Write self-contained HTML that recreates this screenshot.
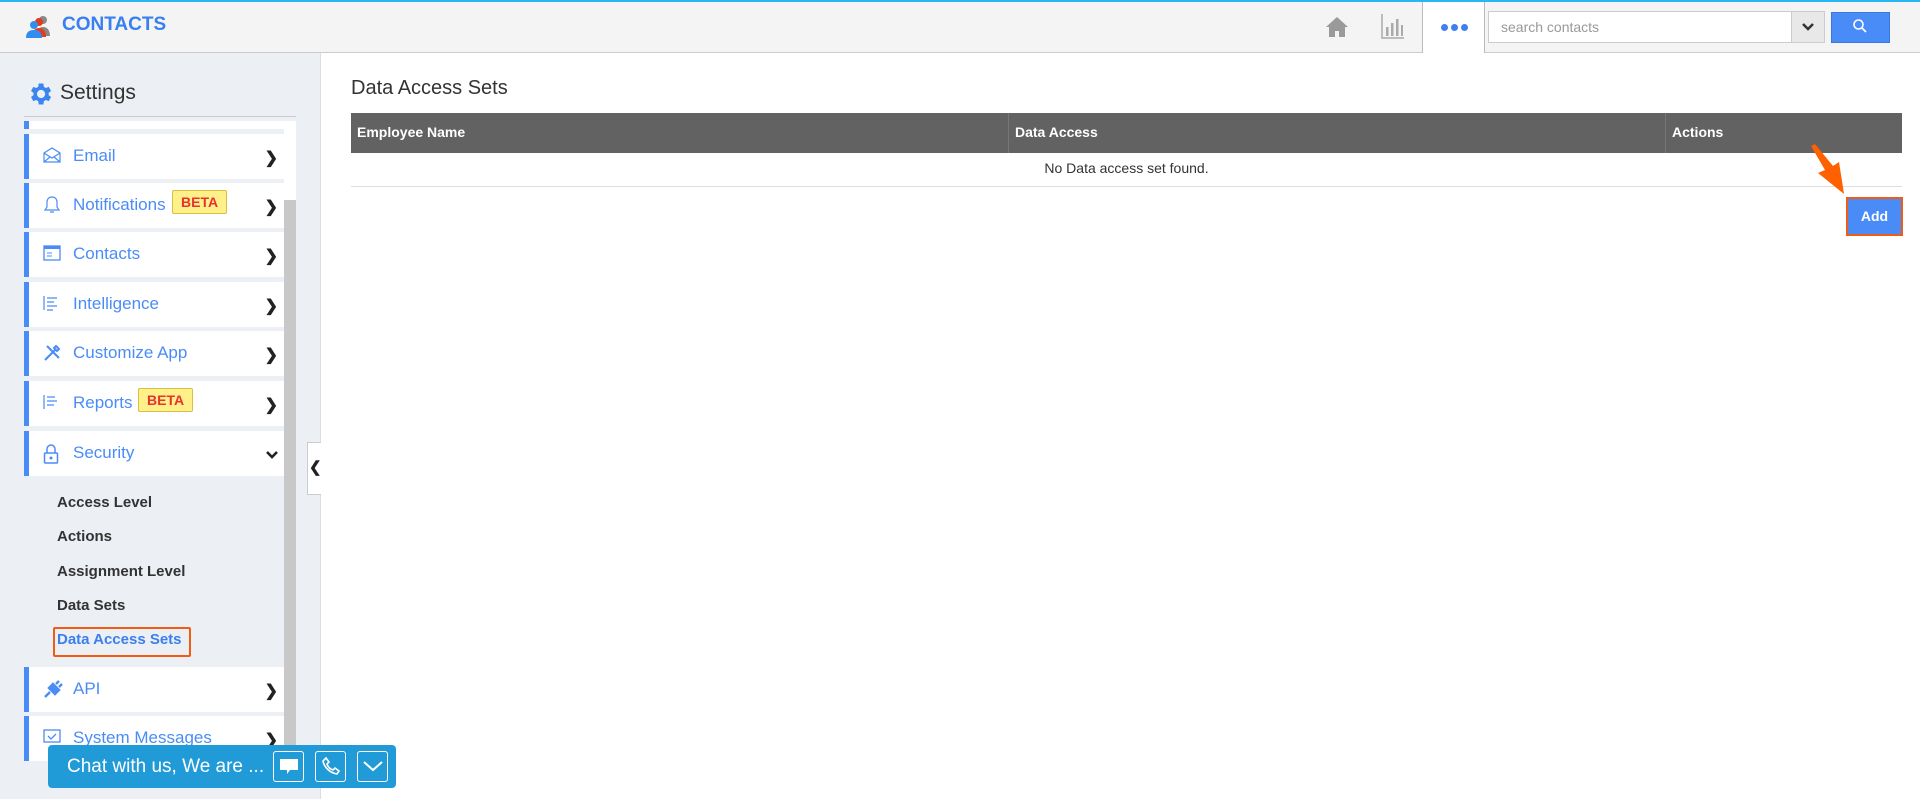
<!DOCTYPE html>
<html><head><style>
*{box-sizing:border-box;margin:0;padding:0}
body{width:1920px;height:799px;overflow:hidden;font-family:"Liberation Sans",Arial,sans-serif;background:#fff;position:relative}
.top{position:absolute;left:0;top:0;width:1920px;height:53px;background:#f4f4f4;border-top:2px solid #29b6f6;border-bottom:1px solid #ccc}
.side{position:absolute;left:0;top:53px;width:321px;height:746px;background:#eceff4;border-right:1px solid #ddd}
.abs{position:absolute}
.row{position:absolute;left:24px;width:260px;height:45px;background:#fff;border-left:5px solid #4a8cf7;color:#4a8cf7;font-size:17px}
.row .t{position:absolute;left:44px;top:12px}
.row .ch{position:absolute;right:6px;top:14px;font-weight:bold;color:#222;font-size:16px}
.row svg{position:absolute;left:14px;top:13px}
.beta{position:absolute;top:7px;background:#fff08a;border:1px solid #d8c040;color:#e8322f;font-weight:bold;font-size:14px;padding:3px 8px;border-radius:2px}
.sub{position:absolute;left:57px;font-size:15px;font-weight:bold;color:#333}
</style></head><body>
<div class="top">
 <svg class="abs" style="left:26px;top:12px" width="26" height="24" viewBox="0 0 26 24"><circle cx="17" cy="6" r="4" fill="#888"/><path d="M10 22c0-6 3-9 7-9s7 3 7 9z" fill="#888"/><circle cx="13" cy="8" r="4" fill="#e53a1e"/><path d="M6 23c0-6 3-9 7-9s7 3 7 9z" fill="#e53a1e"/><circle cx="8" cy="11" r="4" fill="#2f8ef0"/><path d="M0 24c0-6 3-8 8-8s8 2 8 8z" fill="#2f8ef0"/></svg>
 <div class="abs" style="left:62px;top:12px;font-size:19px;font-weight:bold;color:#3a7ff0">CONTACTS</div>
 <svg class="abs" style="left:1325px;top:13px" width="24" height="24" viewBox="0 0 24 24"><path d="M12 2L1 12h3v10h6v-6h4v6h6V12h3z" fill="#9a9a9a"/></svg>
 <svg class="abs" style="left:1381px;top:11px" width="24" height="26" viewBox="0 0 24 26"><path d="M1 1v24h22" stroke="#aaa" fill="none" stroke-width="1.5"/><rect x="5" y="14" width="2.5" height="9" fill="#aaa"/><rect x="10" y="10" width="2.5" height="13" fill="#aaa"/><rect x="15" y="6" width="2.5" height="17" fill="#aaa"/><rect x="20" y="12" width="2" height="11" fill="#aaa"/></svg>
 <div class="abs" style="left:1422px;top:0;width:63px;height:51px;background:#fff;border-left:1px solid #bbb;border-right:1px solid #bbb"></div>
 <div class="abs" style="left:1441px;top:22px;width:26px;height:8px"><span class="abs" style="left:0;width:7px;height:7px;border-radius:50%;background:#3f7ff0"></span><span class="abs" style="left:10px;width:7px;height:7px;border-radius:50%;background:#3f7ff0"></span><span class="abs" style="left:20px;width:7px;height:7px;border-radius:50%;background:#3f7ff0"></span></div>
 <div class="abs" style="left:1488px;top:9px;width:337px;height:32px;background:#fff;border:1px solid #ccc"></div>
 <div class="abs" style="left:1501px;top:17px;font-size:14px;color:#999">search contacts</div>
 <div class="abs" style="left:1791px;top:10px;width:33px;height:30px;background:#e8e8e8;border-left:1px solid #ccc"></div>
 <svg class="abs" style="left:1801px;top:20px" width="14" height="10" viewBox="0 0 14 10"><path d="M2 2l5 5 5-5" stroke="#333" stroke-width="2.5" fill="none"/></svg>
 <div class="abs" style="left:1831px;top:10px;width:59px;height:31px;background:#4a8cf7;border:1px solid #3a78e0"></div>
 <svg class="abs" style="left:1852px;top:16px" width="16" height="16" viewBox="0 0 16 16"><circle cx="6.5" cy="6.5" r="4.5" stroke="#fff" stroke-width="1.6" fill="none"/><path d="M10 10l4 4" stroke="#fff" stroke-width="1.8"/></svg>
</div>
<div class="side">
 <svg class="abs" style="left:26px;top:27px" width="28" height="28" viewBox="0 0 24 24"><path fill="#3a85f0" d="M19.4 13a7.5 7.5 0 000-2l2.1-1.6-2-3.5-2.5 1a7.7 7.7 0 00-1.7-1L14.9 3h-4l-.4 2.9a7.7 7.7 0 00-1.7 1l-2.5-1-2 3.5L6.4 11a7.5 7.5 0 000 2l-2.1 1.6 2 3.5 2.5-1c.5.4 1.100.7 1.7 1l.4 2.9h4l.4-2.9c.6-.3 1.2-.6 1.7-1l2.5 1 2-3.5zM12.9 15.5a3.5 3.5 0 110-7 3.5 3.5 0 010 7z"/></svg>
 <div class="abs" style="left:60px;top:28px;font-size:21px;color:#333">Settings</div>
 <div class="abs" style="left:24px;top:63px;width:272px;height:1px;background:#ccc"></div>
 <div class="abs" style="left:284px;top:68px;width:12px;height:639px;background:#fff"></div>
 <div class="abs" style="left:284px;top:147px;width:12px;height:559px;background:#c8c8c8"></div>
 <div class="abs" style="left:24px;top:68px;width:260px;height:8px;background:#fff;border-left:5px solid #4a8cf7"></div>
</div>
<div class="row" style="top:134px"><svg width="18" height="16" viewBox="0 0 18 16"><path d="M1 6l8-5 8 5v9H1z M1 6l8 5 8-5 M1 15l6-5 M17 15l-6-5" stroke="#4a8cf7" fill="none" stroke-width="1.2"/></svg><span class="t">Email</span><span class="ch">❯</span></div>
<div class="row" style="top:183px"><svg width="18" height="18" viewBox="0 0 18 18"><path d="M9 1c-3 0-5 2-5 5v5l-2 3h14l-2-3V6c0-3-2-5-5-5zM7 16h4" stroke="#4a8cf7" fill="none" stroke-width="1.2"/></svg><span class="t">Notifications</span><span class="beta" style="left:143px">BETA</span><span class="ch">❯</span></div>
<div class="row" style="top:232px"><svg width="18" height="16" viewBox="0 0 18 16"><rect x="1" y="1" width="16" height="14" stroke="#4a8cf7" fill="none" stroke-width="1.3"/><rect x="1" y="1" width="16" height="3" fill="#4a8cf7"/><path d="M4 8h5M4 11h5" stroke="#4a8cf7"/></svg><span class="t">Contacts</span><span class="ch">❯</span></div>
<div class="row" style="top:282px"><svg width="18" height="16" viewBox="0 0 18 16"><path d="M1 1v14M4 3h10M4 7h7M4 11h10M4 15h6" stroke="#4a8cf7" stroke-width="1.2"/></svg><span class="t">Intelligence</span><span class="ch">❯</span></div>
<div class="row" style="top:331px"><svg width="18" height="18" viewBox="0 0 18 18"><path d="M2 16L12 6M4 2l12 12M13 2l3 3-2 2-3-3z" stroke="#4a8cf7" stroke-width="2" fill="none"/></svg><span class="t">Customize App</span><span class="ch">❯</span></div>
<div class="row" style="top:381px"><svg width="18" height="16" viewBox="0 0 18 16"><path d="M1 1v14M4 3h8M4 7h10M4 11h7" stroke="#4a8cf7" stroke-width="1.2"/></svg><span class="t">Reports</span><span class="beta" style="left:109px">BETA</span><span class="ch">❯</span></div>
<div class="row" style="top:431px"><svg width="16" height="20" viewBox="0 0 16 20"><path d="M4 9V5a4 4 0 018 0v4" stroke="#4a8cf7" fill="none" stroke-width="1.5"/><rect x="1.5" y="9" width="13" height="10" rx="1" stroke="#4a8cf7" fill="none" stroke-width="1.5"/><circle cx="8" cy="14" r="1.5" fill="#4a8cf7"/></svg><span class="t">Security</span><svg style="left:236px;top:19px" width="14" height="10" viewBox="0 0 14 10"><path d="M2 2l5 5 5-5" stroke="#222" stroke-width="2.6" fill="none"/></svg></div>
<div class="sub" style="top:494px">Access Level</div>
<div class="sub" style="top:528px">Actions</div>
<div class="sub" style="top:563px">Assignment Level</div>
<div class="sub" style="top:597px">Data Sets</div>
<div class="abs" style="left:53px;top:627px;width:138px;height:30px;border:2px solid #f25c12;border-radius:2px"></div>
<div class="sub" style="top:631px;color:#3a7ff0">Data Access Sets</div>
<div class="row" style="top:667px"><svg width="20" height="18" viewBox="0 0 20 18"><path d="M2 17l5-5M6 8l6 6 4-4-6-6zM13 4l3-3M16 7l3-3" stroke="#4a8cf7" stroke-width="2.4" fill="#4a8cf7"/></svg><span class="t">API</span><span class="ch">❯</span></div>
<div class="row" style="top:716px;height:45px"><svg width="18" height="16" viewBox="0 0 18 16"><rect x="1" y="1" width="16" height="12" stroke="#4a8cf7" fill="none" stroke-width="1.3"/><path d="M5 7l3 3 5-5" stroke="#4a8cf7" fill="none" stroke-width="1.3"/></svg><span class="t">System Messages</span><span class="ch">❯</span></div>
<div class="abs" style="left:307px;top:442px;width:14px;height:53px;background:#fff;border:1px solid #ccc;border-right:none"></div>
<div class="abs" style="left:309px;top:458px;font-weight:bold;font-size:15px;color:#222">❮</div>
<div class="abs" style="left:48px;top:745px;width:348px;height:43px;background:#219bd8;border-radius:4px"></div>
<div class="abs" style="left:67px;top:756px;font-size:19px;color:#fff">Chat with us, We are ...</div>
<div class="abs" style="left:273px;top:751px;width:31px;height:31px;border:1px solid #fff;border-radius:3px"></div>
<svg class="abs" style="left:279px;top:758px" width="20" height="18" viewBox="0 0 20 18"><path d="M1 1h18v11h-8l-3 4v-4H1z" fill="#fff"/></svg>
<div class="abs" style="left:315px;top:751px;width:31px;height:31px;border:1px solid #fff;border-radius:3px"></div>
<svg class="abs" style="left:321px;top:756px" width="20" height="20" viewBox="0 0 20 20"><path d="M5 2l3 4-2 2c1 3 3 5 6 6l2-2 4 3-2 3C9 17 3 11 2 5z" fill="none" stroke="#fff" stroke-width="1.6"/></svg>
<div class="abs" style="left:357px;top:751px;width:31px;height:31px;border:1px solid #fff;border-radius:3px"></div>
<svg class="abs" style="left:362px;top:760px" width="22" height="12" viewBox="0 0 22 12"><path d="M2 2l9 8 9-8" fill="none" stroke="#fff" stroke-width="2"/></svg>

<div class="abs" style="left:351px;top:77px;font-size:20px;color:#333">Data Access Sets</div>
<div class="abs" style="left:351px;top:113px;width:1551px;height:40px;background:#626262"></div>
<div class="abs" style="left:1008px;top:113px;width:1px;height:40px;background:#777"></div>
<div class="abs" style="left:1665px;top:113px;width:1px;height:40px;background:#777"></div>
<div class="abs" style="left:357px;top:124px;font-size:14px;font-weight:bold;color:#fff">Employee Name</div>
<div class="abs" style="left:1015px;top:124px;font-size:14px;font-weight:bold;color:#fff">Data Access</div>
<div class="abs" style="left:1672px;top:124px;font-size:14px;font-weight:bold;color:#fff">Actions</div>
<div class="abs" style="left:351px;top:160px;width:1551px;text-align:center;font-size:14px;color:#333">No Data access set found.</div>
<div class="abs" style="left:351px;top:186px;width:1551px;height:1px;background:#ddd"></div>
<svg class="abs" style="left:1805px;top:144px" width="42" height="52" viewBox="0 0 42 52"><path d="M6 2l14 24-7 3 26 21-5-32-6 4L10 0z" fill="#ff6000"/></svg>
<div class="abs" style="left:1846px;top:197px;width:57px;height:39px;border:2px solid #f25c12;background:#4a8cf7;color:#fff;font-weight:bold;font-size:14px;text-align:center;line-height:34px">Add</div>
</body></html>
